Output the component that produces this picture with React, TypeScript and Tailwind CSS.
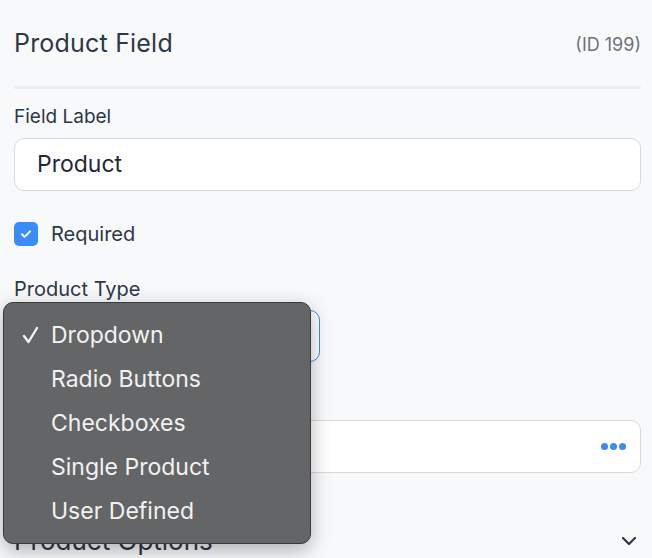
import React from "react";

export default function App() {
  const items = ["Dropdown", "Radio Buttons", "Checkboxes", "Single Product", "User Defined"];
  return (
    <div className="relative w-[652px] h-[558px] overflow-hidden bg-[#f8f9fb] text-[#2d3748]" style={{ fontFamily: "Inter, 'Noto Sans', sans-serif" }}>
      <div className="pl-[14px] pr-[11px] pt-[26px]">
        <div className="flex items-center justify-between h-[36px]">
          <span className="text-[25px] tracking-[0.2px]">Product Field</span>
          <span className="text-[18px] text-[#6b7280]">(ID 199)</span>
        </div>
        <div className="mt-[24px] h-[3px] bg-[#eceef1]" />
        <div className="mt-[15px] text-[19px] leading-[26px]">Field Label</div>
        <div className="mt-[8px] h-[53px] rounded-[10px] border border-[#d6d9de] bg-white flex items-center pl-[22px] text-[23px] text-[#1f2937]">Product</div>
        <div className="mt-[28px] flex items-center gap-[13px]">
          <div className="w-[24px] h-[24px] rounded-[5px] bg-[#3b8cf5] flex items-center justify-center">
            <svg width="14" height="14" viewBox="0 0 14 14" fill="none"><path d="M3 7.3l2.6 2.6L11 4.4" stroke="white" strokeWidth="2" strokeLinecap="round" strokeLinejoin="round" /></svg>
          </div>
          <span className="text-[20px]">Required</span>
        </div>
        <div className="mt-[27px] text-[20px] leading-[26px]">Product Type</div>
        <div className="mt-[8px] w-[306px] h-[52px] rounded-[10px] border border-[#3b8cf5] bg-white" />
        <div className="mt-[22px] h-[26px] text-[18px] invisible">Field Placeholder</div>
        <div className="mt-[10px] h-[53px] rounded-[10px] border border-[#d6d9de] bg-white flex items-center justify-end pr-[14px]">
          <div className="flex gap-[2px]">
            <span className="w-[7px] h-[7px] rounded-full bg-[#3b8cf5]" />
            <span className="w-[7px] h-[7px] rounded-full bg-[#3b8cf5]" />
            <span className="w-[7px] h-[7px] rounded-full bg-[#3b8cf5]" />
          </div>
        </div>
        <div className="mt-[48px] flex items-center justify-between">
          <span className="text-[26px]">Product Options</span>
          <svg width="20" height="20" viewBox="0 0 20 20" fill="none" className="mr-[2px]"><path d="M4 7l6 6 6-6" stroke="#2d3748" strokeWidth="2.2" strokeLinecap="round" strokeLinejoin="round" /></svg>
        </div>
      </div>
      <div className="absolute left-[3px] top-[302px] w-[308px] h-[242px] rounded-[10px] border border-[#3a3a3a] bg-[#646566] shadow-[0_6px_20px_rgba(0,0,0,0.3)] pt-[10px]">
        {items.map((t, i) => (
          <div key={t} className="flex items-center h-[44px] text-[23px] text-[#f2f2f2]">
            <span className="w-[47px] pl-[17px] flex items-center">
              {i === 0 ? (
                <svg width="20" height="20" viewBox="0 0 20 20" fill="none"><path d="M3 11l4.5 6L16 3" stroke="#f2f2f2" strokeWidth="2.4" strokeLinecap="round" strokeLinejoin="round" /></svg>
              ) : null}
            </span>
            <span>{t}</span>
          </div>
        ))}
      </div>
    </div>
  );
}
